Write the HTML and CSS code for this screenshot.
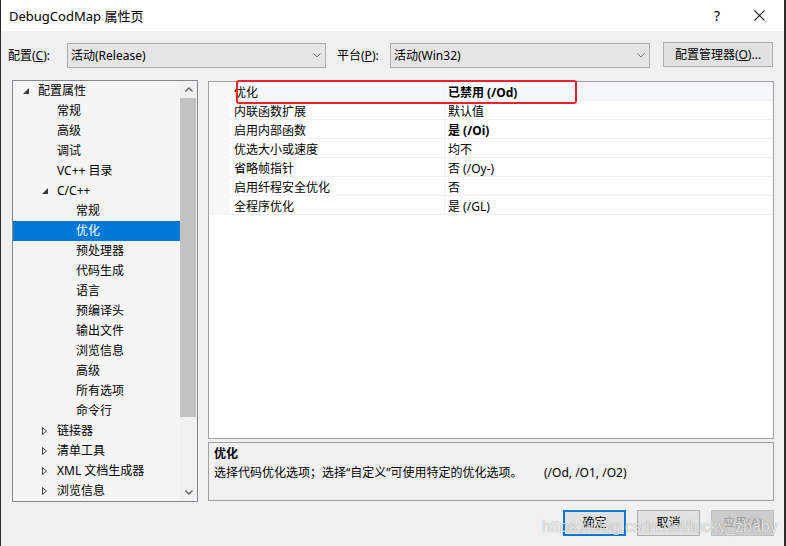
FILE: index.html
```html
<!DOCTYPE html>
<html lang="zh-CN">
  <head>
    <meta charset="UTF-8" />
    <title>DebugCodMap 属性页</title>
    <link rel="stylesheet" href="styles.css">
  </head>
  <body>
    <div class="window">
      <!-- title bar -->
      <div class="titlebar">
        <span class="title">DebugCodMap 属性页</span>
        <div class="title-btns">
          <span class="help">?</span>
          <svg class="close" width="11" height="11" viewBox="0 0 11 11">
            <path d="M0.5 0.5 L10.5 10.5 M10.5 0.5 L0.5 10.5" stroke="#222" stroke-width="1.1" fill="none" />
          </svg>
        </div>
      </div>

      <!-- configuration row -->
      <div class="toolbar">
        <span class="lbl lbl-config">配置(<u>C</u>):</span>
        <div class="combo combo-config">
          <span>活动(Release)</span>
          <svg width="8" height="5" viewBox="0 0 8 5"><path d="M0.5 0.5 L4 4 L7.5 0.5" stroke="#707070" fill="none" /></svg>
        </div>
        <span class="lbl lbl-platform">平台(<u>P</u>):</span>
        <div class="combo combo-platform">
          <span>活动(Win32)</span>
          <svg width="8" height="5" viewBox="0 0 8 5"><path d="M0.5 0.5 L4 4 L7.5 0.5" stroke="#707070" fill="none" /></svg>
        </div>
        <button class="btn btn-manager">配置管理器(<u>O</u>)...</button>
      </div>

      <div class="main">
        <!-- tree -->
        <div class="tree">
          <ul class="tree-list">
            <li class="node lv1">
              <span class="tog"><svg width="6" height="6" viewBox="0 0 6 6"><path d="M6 0 L6 6 L0 6 Z" fill="#3c3c3c" /></svg></span>配置属性
            </li>
            <li class="node lv2">常规</li>
            <li class="node lv2">高级</li>
            <li class="node lv2">调试</li>
            <li class="node lv2">VC++ 目录</li>
            <li class="node lv2 has-tog">
              <span class="tog"><svg width="6" height="6" viewBox="0 0 6 6"><path d="M6 0 L6 6 L0 6 Z" fill="#3c3c3c" /></svg></span>C/C++
            </li>
            <li class="node lv3">常规</li>
            <li class="node lv3 sel">优化</li>
            <li class="node lv3">预处理器</li>
            <li class="node lv3">代码生成</li>
            <li class="node lv3">语言</li>
            <li class="node lv3">预编译头</li>
            <li class="node lv3">输出文件</li>
            <li class="node lv3">浏览信息</li>
            <li class="node lv3">高级</li>
            <li class="node lv3">所有选项</li>
            <li class="node lv3">命令行</li>
            <li class="node lv2 has-tog">
              <span class="tog"><svg width="5" height="8" viewBox="0 0 5 8"><path d="M0.5 0.5 L4.5 4 L0.5 7.5 Z" stroke="#404040" fill="none" /></svg></span>链接器
            </li>
            <li class="node lv2 has-tog">
              <span class="tog"><svg width="5" height="8" viewBox="0 0 5 8"><path d="M0.5 0.5 L4.5 4 L0.5 7.5 Z" stroke="#404040" fill="none" /></svg></span>清单工具
            </li>
            <li class="node lv2 has-tog">
              <span class="tog"><svg width="5" height="8" viewBox="0 0 5 8"><path d="M0.5 0.5 L4.5 4 L0.5 7.5 Z" stroke="#404040" fill="none" /></svg></span>XML 文档生成器
            </li>
            <li class="node lv2 has-tog">
              <span class="tog"><svg width="5" height="8" viewBox="0 0 5 8"><path d="M0.5 0.5 L4.5 4 L0.5 7.5 Z" stroke="#404040" fill="none" /></svg></span>浏览信息
            </li>
          </ul>
          <div class="vscroll">
            <div class="arrow">
              <svg width="8" height="5" viewBox="0 0 8 5"><path d="M0.5 4.5 L4 1 L7.5 4.5" stroke="#606060" stroke-width="1.4" fill="none" /></svg>
            </div>
            <div class="track"><div class="thumb"></div></div>
            <div class="arrow">
              <svg width="8" height="5" viewBox="0 0 8 5"><path d="M0.5 0.5 L4 4 L7.5 0.5" stroke="#606060" stroke-width="1.4" fill="none" /></svg>
            </div>
          </div>
        </div>

        <div class="right">
          <!-- property grid -->
          <div class="props">
            <div class="row cur"><span class="gut"></span><span class="name">优化</span><span class="val b">已禁用 (/Od)</span></div>
            <div class="row"><span class="gut"></span><span class="name">内联函数扩展</span><span class="val">默认值</span></div>
            <div class="row"><span class="gut"></span><span class="name">启用内部函数</span><span class="val b">是 (/Oi)</span></div>
            <div class="row"><span class="gut"></span><span class="name">优选大小或速度</span><span class="val">均不</span></div>
            <div class="row"><span class="gut"></span><span class="name">省略帧指针</span><span class="val">否 (/Oy-)</span></div>
            <div class="row"><span class="gut"></span><span class="name">启用纤程安全优化</span><span class="val">否</span></div>
            <div class="row"><span class="gut"></span><span class="name">全程序优化</span><span class="val">是 (/GL)</span></div>
            <div class="mark"></div>
          </div>

          <!-- description -->
          <div class="desc">
            <div class="desc-title">优化</div>
            <div class="desc-text"><span class="desc-main">选择代码优化选项；选择“自定义”可使用特定的优化选项。</span>(/Od, /O1, /O2)</div>
          </div>
        </div>
      </div>

      <div class="actions">
        <button class="btn act default">确定</button>
        <button class="btn act">取消</button>
        <button class="btn act disabled">应用(A)</button>
      </div>

      <div class="watermark">https://blog.csdn.net/lucky_zbaby</div>
    </div>
  </body>
</html>
```

FILE: styles.css
```css
* {
  margin: 0;
  padding: 0;
  box-sizing: border-box;
}

body {
  font-family: 'Noto Sans', 'Noto Sans CJK SC', sans-serif;
  font-size: 12px;
  color: #000;
  background-color: #f0f0f0;
}

.window {
  position: relative;
  width: 786px;
  height: 546px;
  display: flex;
  flex-direction: column;
  background-color: #f0f0f0;
  border-left: 1px solid #2b2b2b;
  border-right: 2px solid #2b2b2b;
  overflow: hidden;
}

/* title bar */
.titlebar {
  height: 31px;
  flex-shrink: 0;
  display: flex;
  align-items: center;
  justify-content: space-between;
  padding: 0 19px 0 8px;
  background-color: #fff;
}

.title {
  font-size: 13px;
  line-height: 18px;
}

.title-btns {
  display: flex;
  align-items: center;
  gap: 32px;

  & .help {
    width: 10px;
    font-size: 14px;
    line-height: 18px;
    text-align: center;
  }
}

/* toolbar */
.toolbar {
  height: 49px;
  flex-shrink: 0;
  display: flex;
  align-items: flex-start;
  padding: 12px 0 0 7px;
}

.lbl {
  line-height: 25px;
  white-space: nowrap;
}

.lbl-config {
  width: 59px;
}

.lbl-platform {
  width: 53px;
  margin-left: 11px;
}

.combo {
  height: 25px;
  display: flex;
  align-items: center;
  justify-content: space-between;
  padding: 0 4px 0 3px;
  background-color: #e5e5e5;
  border: 1px solid #adadad;
  line-height: 18px;
}

.combo-config {
  width: 259px;
}

.combo-platform {
  width: 260px;
}

.btn {
  font-family: inherit;
  font-size: 12px;
  line-height: 18px;
  color: #000;
  background-color: #e1e1e1;
  border: 1px solid #adadad;
}

.btn-manager {
  width: 110px;
  height: 25px;
  margin: -1px 0 0 13px;
}

/* main area */
.main {
  height: 422px;
  flex-shrink: 0;
  display: flex;
  gap: 10px;
  padding-left: 11px;
}

.tree {
  width: 186px;
  height: 422px;
  display: flex;
  background-color: #f5f5f5;
  border: 1px solid #828790;
}

.tree-list {
  flex: 1;
  list-style: none;
}

.node {
  height: 20px;
  display: flex;
  align-items: center;
  line-height: 20px;
  white-space: nowrap;

  &.lv1 {
    padding-left: 10px;
  }

  &.lv2 {
    padding-left: 44px;

    &.has-tog {
      padding-left: 29px;
    }
  }

  &.lv3 {
    padding-left: 63px;
  }

  &.sel {
    background-color: #0078d7;
    color: #fff;
  }

  & .tog {
    width: 15px;
    display: flex;
    align-items: center;
  }
}

.vscroll {
  width: 17px;
  display: flex;
  flex-direction: column;
  background-color: #f0f0f0;

  & .arrow {
    height: 17px;
    display: flex;
    align-items: center;
    justify-content: center;
  }

  & .track {
    flex: 1;
  }

  & .thumb {
    height: 319px;
    margin-right: 1px;
    background-color: #c2c2c2;
  }
}

.right {
  width: 566px;
  display: flex;
  flex-direction: column;
}

/* property grid */
.props {
  position: relative;
  height: 358px;
  margin-top: 1px;
  background-color: #fff;
  border: 1px solid #a0a0a0;
}

.row {
  display: grid;
  grid-template-columns: 21px 215px 1fr;
  height: 19px;

  & .gut {
    background-color: #f7f7f7;
  }

  & .name,
  & .val {
    height: 19px;
    padding-top: 3px;
    line-height: 15px;
    border-bottom: 1px solid #f0f0f0;
    white-space: nowrap;
  }

  & .name {
    padding-left: 4px;
    border-right: 1px solid #f0f0f0;
  }

  & .val {
    padding-left: 3px;
  }

  & .b {
    font-weight: bold;
  }

  &.cur .name,
  &.cur .val {
    background-color: #f6f7fa;
  }
}

.mark {
  position: absolute;
  left: 27px;
  top: -2px;
  width: 341px;
  height: 24px;
  border: 2px solid #e8232b;
  border-radius: 3px;
}

/* description */
.desc {
  height: 59px;
  margin-top: 3px;
  padding: 2px 5px;
  border: 1px solid #a0a0a0;
  background-color: #f0f0f0;
  line-height: 18px;
}

.desc-title {
  font-weight: bold;
}

.desc-text {
  padding-top: 1px;
}

.desc-main {
  display: inline-block;
  width: 330px;
}

/* dialog buttons */
.actions {
  display: flex;
  justify-content: flex-end;
  gap: 11px;
  margin-top: 8px;
  padding-right: 10px;

  & .act {
    width: 63px;
    height: 26px;
  }

  & .default {
    border: 2px solid #0078d7;
  }

  & .disabled {
    background-color: #cccccc;
    border-color: #bfbfbf;
    color: #a0a0a0;
  }
}

.watermark {
  position: absolute;
  left: 541px;
  top: 517px;
  font-family: 'Liberation Sans', sans-serif;
  font-size: 16px;
  line-height: 20px;
  color: rgba(255, 255, 255, 0.8);
  text-shadow: 0 0 1px rgba(0, 0, 0, 0.45);
  white-space: nowrap;
  pointer-events: none;
}
```
